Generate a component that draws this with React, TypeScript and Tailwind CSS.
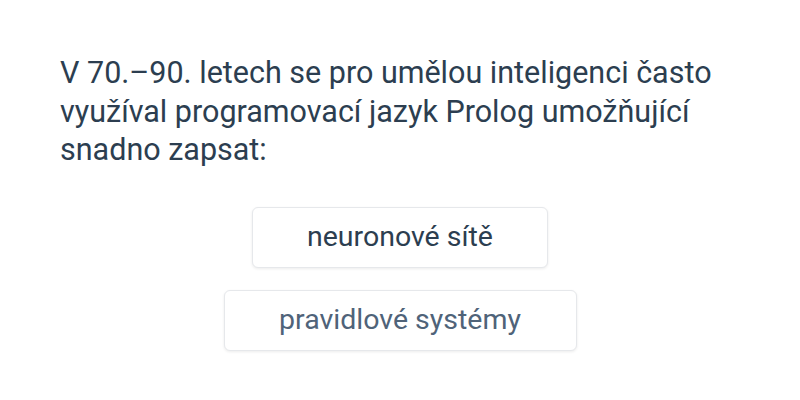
const options = [
  { label: 'neuronové sítě', tone: 'text-[#2c3e50]', width: 'w-[296px]' },
  { label: 'pravidlové systémy', tone: 'text-[#4f6379]', width: 'w-[353px]' },
];

export default function App() {
  return (
    <div
      className="w-[800px] h-[400px] bg-white overflow-hidden"
      style={{ fontFamily: 'Roboto, "Noto Sans", sans-serif' }}
    >
      <p className="pt-[54px] px-[60px] text-[30.5px] leading-[38.5px] text-[#2c3e50]">
        V 70.–90. letech se pro umělou inteligenci často využíval programovací jazyk Prolog
        umožňující snadno zapsat:
      </p>

      <div className="mt-[37px] flex flex-col items-center gap-[22px]">
        {options.map((opt) => (
          <button
            key={opt.label}
            className={`${opt.width} h-[61px] flex items-center justify-center rounded-[6px] border border-[#e6e8eb] bg-white shadow-[0_1px_3px_rgba(0,0,0,0.08)] text-[28.5px] ${opt.tone}`}
          >
            {opt.label}
          </button>
        ))}
      </div>
    </div>
  );
}
